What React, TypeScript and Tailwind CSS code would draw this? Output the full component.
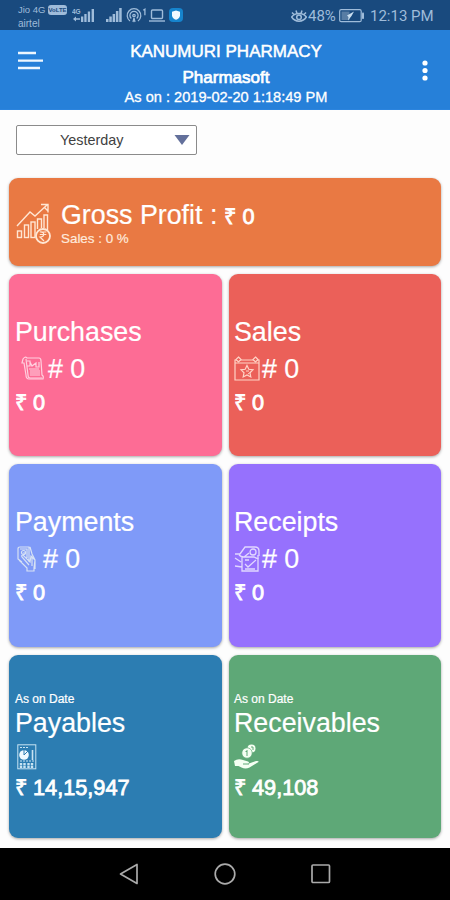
import React from "react";

const sans = "font-['Liberation_Sans',Arial,sans-serif]";

function Signal({ className = "" }: { className?: string }) {
  return (
    <svg className={className} width="16" height="14" viewBox="0 0 16 14" fill="#9fbcda">
      <rect x="0" y="11" width="2.5" height="3" />
      <rect x="3.3" y="8.5" width="2.5" height="5.5" />
      <rect x="6.6" y="6" width="2.5" height="8" />
      <rect x="9.9" y="3" width="2.5" height="11" />
      <rect x="13.2" y="0" width="2.5" height="14" />
    </svg>
  );
}

function StatusBar() {
  return (
    <div className="flex h-[30px] bg-[#194a7e] pl-[18px] text-[#9fbcda]">
      <div className="w-[50px] pt-[3px] text-[9.5px] leading-[13.5px]">
        <div className="flex items-center">
          <span className="w-[30px] whitespace-nowrap">Jio 4G</span>
          <span className="flex h-[10px] w-[19px] items-center justify-center rounded-[3px] bg-[#9fbcda] text-[6px] leading-none font-bold text-[#194a7e]">VoLTE</span>
        </div>
        <div className="text-[10px]">airtel</div>
      </div>
      <svg className="mt-[8px] ml-[4px]" width="23" height="15" viewBox="0 0 23 15" fill="#9fbcda">
        <text x="0" y="6" fontSize="6.5" fontWeight="bold" fontFamily="Liberation Sans">4G</text>
        <path d="M1 11l3-2.5v1.7h4v1.600H4v1.700zM9 8.500h2.300V14H9zM12.300 6h2.300v8h-2.300zM15.800 3.500h2.300V14h-2.300zM19.600 1h2.400v13h-2.400z" />
      </svg>
      <Signal className="mt-[8px] ml-[11px]" />
      <svg className="mt-[8px] ml-[4px]" width="21" height="15" viewBox="0 0 21 15" fill="none" stroke="#9fbcda" strokeWidth="1.300">
        <path d="M4 13A6.800 6.800 0 1 1 12 13M5.300 10.500a4.100 4.100 0 1 1 5.400 0" />
        <circle cx="8" cy="7.500" r="1.200" />
        <path d="M7 14l1-4 1 4M17.200 2.200l1.700-1v6" />
      </svg>
      <svg className="mt-[9px] ml-[2px]" width="16" height="13" viewBox="0 0 16 13" fill="none" stroke="#9fbcda" strokeWidth="1.400">
        <rect x="2.500" y="1" width="11" height="8.500" rx="1" />
        <path d="M0 12h16" />
      </svg>
      <svg className="mt-[8px] ml-[4px]" width="14" height="14" viewBox="0 0 14 14">
        <rect width="14" height="14" rx="4" fill="#1684cd" />
        <path d="M7 2.500l4 1.300v3.600C11 9.500 8.800 11 7 11.800 5.200 11 3 9.500 3 7.400V3.800z" fill="#f2faff" />
      </svg>
      <svg className="mt-[9px] ml-[108px]" width="16" height="14" viewBox="0 0 16 14" fill="none" stroke="#9fbcda" strokeWidth="1.500">
        <path d="M.7 8C4 3.200 12 3.200 15.300 8 12 13.500 4 13.500.7 8zM1 3.500l2.200 2.300M5 1.500l1 3M11 1.500l-1 3M15 3.500l-2.200 2.300" />
        <circle cx="8" cy="8.300" r="2.300" />
      </svg>
      <span className="mt-[6px] ml-[1px] w-[28px] font-[Roboto,sans-serif] text-[15px] leading-[20px]">48%</span>
      <svg className="mt-[9px] ml-[3px]" width="26" height="14" viewBox="0 0 26 14">
        <rect x=".7" y=".7" width="21.500" height="12" rx="1.500" fill="none" stroke="#9fbcda" strokeWidth="1.200" />
        <rect x="2.500" y="2.500" width="8" height="8.500" fill="#587da4" />
        <path d="M8 6.500l7-4-2.500 4.500L9 11.500l.5-3.500z" fill="#c9deef" />
        <rect x="23" y="3.500" width="2" height="6.500" rx=".8" fill="#9fbcda" />
      </svg>
      <span className="mt-[6px] ml-[5px] font-[Roboto,sans-serif] text-[15px] leading-[20px] whitespace-nowrap">12:13 PM</span>
    </div>
  );
}

function Header() {
  return (
    <header className="grid h-[80px] grid-cols-[50px_350px_50px] border-b border-[#2b84de] bg-[#2680d9] text-white">
      <svg className="mt-[20px] ml-[18px]" width="26" height="22" viewBox="0 0 26 22" stroke="#eef7ff" strokeWidth="2.300">
        <path d="M0 3h18M0 10.700h25M0 18h22" />
      </svg>
      <div className="flex flex-col items-center whitespace-nowrap">
        <div className="mt-[11px] h-[26px] pl-[2px] text-[17px] leading-[22px] [-webkit-text-stroke:0.5px_white]">KANUMURI PHARMACY</div>
        <div className="h-[20px] pl-[2px] text-[17px] leading-[22px] [-webkit-text-stroke:0.7px_white]">Pharmasoft</div>
        <div className="pl-[2px] text-[14.600px] leading-[20px] [-webkit-text-stroke:0.3px_white]">As on : 2019-02-20 1:18:49 PM</div>
      </div>
      <svg className="mt-[29px] ml-[21px]" width="8" height="22" viewBox="0 0 8 22" fill="white">
        <circle cx="4" cy="4" r="2.600" />
        <circle cx="4" cy="11.500" r="2.600" />
        <circle cx="4" cy="19" r="2.600" />
      </svg>
    </header>
  );
}

function ProfitIcon() {
  return (
    <svg width="36" height="42" viewBox="0 0 36 42" fill="none" stroke="#ffe6d3" strokeWidth="1.400">
      <path d="M1 23L14 9l5 4L31 2M25 1.500h7v8M28 4l4 4" />
      <rect x="1.500" y="28" width="4" height="6.500" />
      <rect x="8.500" y="22" width="4" height="12.500" />
      <rect x="15" y="19" width="4" height="15.500" />
      <path d="M21.500 26V16h4v9M28 25V12h3.500v15" />
      <circle cx="27" cy="33" r="7" fill="#e97943" strokeWidth="1.800" />
      <path d="M23.800 29h6.500M23.800 31.500h6.500M24 29c5-.5 5 5 0 5l4 4" strokeWidth="1.200" />
    </svg>
  );
}

function PurchaseIcon() {
  return (
    <svg width="24" height="26" viewBox="0 0 24 26" fill="none" stroke="#ffd0df" strokeWidth="1.200">
      <path d="M2 3q2-3 4-1h12q2 0 2 3l1 14q2 1 1 4H8q-3 0-3-4L3 7H1z" />
      <path d="M5 3l2 16q0 3 2 3h12M9 6l2 4 4-3v4h3V6M8 13h10M9 15h10M9 17h10M9 19h10M6 5h3v5H6" />
    </svg>
  );
}

function SalesIcon() {
  return (
    <svg width="26" height="26" viewBox="0 0 26 26" fill="none" stroke="#ffd3c6" strokeWidth="1.200">
      <path d="M3 4H1v20h24V4h-2M6 4h14M1 7h24" />
      <path d="M4.500 1L7 3.500 4.500 6 2 3.500zM21.500 1L24 3.500 21.500 6 19 3.500z" />
      <path d="M13 9.500l1.800 3.800 4.200.5-3 3 .8 4.200-3.800-2-3.800 2 .8-4.200-3-3 4.200-.5z" />
      <path d="M12 15h3M14 18l3-2" strokeWidth="1" />
    </svg>
  );
}

function PaymentIcon() {
  return (
    <svg width="20" height="28" viewBox="0 0 20 28" fill="none" stroke="#d7e2f4" strokeWidth="1.200">
      <path d="M5 17L1 14V4q0-2 2-2h9v15M3 4h7v9M13 2l2 7 3 6v9M2 15l8 8v3h7v-3l1-8-4-4-1 6-7-7q-2 0-1 2l7 8M6 8h3M15 12v9" />
      <circle cx="6.500" cy="7.500" r="2" />
    </svg>
  );
}

function ReceiptIcon() {
  return (
    <svg width="26" height="28" viewBox="0 0 26 28" fill="none" stroke="#e1d7ff" strokeWidth="1.300">
      <path d="M1 9h5l5-7h10q4 0 4 4v5M1 13l6 4M1 21l7 1M8 12h12l4 2v12H8zM5 10q2 2 5 2l5-4" />
      <circle cx="19" cy="7" r="3" />
      <path d="M11 19l3 3 8-7M11 15h4M11 24h10M24 10v4" />
    </svg>
  );
}

function PayableIcon() {
  return (
    <svg width="20" height="26" viewBox="0 0 20 26" fill="none" stroke="#c7e3f2" strokeWidth="1">
      <rect x=".8" y=".8" width="18" height="24" />
      <path d="M3 3.500h8M3 17h14" strokeDasharray="2 1" />
      <circle cx="7" cy="11" r="4.800" fill="#eefaff" stroke="none" />
      <path d="M7 5v6l4-4" stroke="#2c7db2" />
      <path d="M15.500 6v10" strokeWidth="1.600" />
      <path d="M4 19v5M7.500 19v5M11.500 19v5M15 19v5" strokeWidth="2.400" strokeDasharray="2.200 .6" />
    </svg>
  );
}

function ReceivableIcon() {
  return (
    <svg width="26" height="26" viewBox="0 0 26 26" fill="#f5fff3">
      <circle cx="17.500" cy="4.500" r="4" />
      <circle cx="13" cy="9" r="5.200" stroke="#5ea877" strokeWidth=".7" />
      <path d="M0 17q4-3 9-1l5 1.500q2 1 0 2h-4 5l7-2.500q3-.5 2.500 1l-9 5.500q-4 2-8 0l-3-1.500H1z" />
      <path d="M13 6v6M11.500 7.500H13M17 3h2v3M9 20h6" stroke="#5ea877" fill="none" />
    </svg>
  );
}

const light = "text-[26.8px] leading-[32px] whitespace-nowrap [-webkit-text-stroke:0.2px_white]";
const amount = "text-[21.7px] leading-[26px] whitespace-nowrap [-webkit-text-stroke:0.8px_white]";
const cardBase = "rounded-[9px] shadow-[0_1px_3px_rgba(0,0,0,0.35)]";

function CountCard({ title, color, icon, iconBox }: { title: string; color: string; icon: React.ReactNode; iconBox: string }) {
  return (
    <section className={`${cardBase} ${color} h-full pt-[42px]`}>
      <h2 className={light}>{title}</h2>
      <div className="mt-[5px] flex h-[32px] items-center">
        <span className={iconBox}>{icon}</span>
        <span className={light}># 0</span>
      </div>
      <div className={`${amount} mt-[5px]`}>₹ 0</div>
    </section>
  );
}

function BalanceCard({ title, color, icon, value }: { title: string; color: string; icon: React.ReactNode; value: string }) {
  return (
    <section className={`${cardBase} ${color} h-full pt-[36px]`}>
      <div className="text-[12px] leading-[16px] [-webkit-text-stroke:0.2px_white]">As on Date</div>
      <h2 className={light}>{title}</h2>
      <div className="mt-[4px] flex h-[28px] items-center">{icon}</div>
      <div className={`${amount} mt-[4px]`}>{value}</div>
    </section>
  );
}

function NavBar() {
  return (
    <nav className="flex h-[52px] items-center justify-center gap-[73px] bg-black">
      <svg width="22" height="24" viewBox="0 0 22 24" fill="none" stroke="#aaa" strokeWidth="1.700" strokeLinejoin="round">
        <path d="M2.500 12L19 2.500v19z" />
      </svg>
      <svg width="24" height="24" viewBox="0 0 24 24" fill="none" stroke="#aaa" strokeWidth="1.700">
        <circle cx="12" cy="12" r="9.800" />
      </svg>
      <svg width="22" height="24" viewBox="0 0 22 24" fill="none" stroke="#aaa" strokeWidth="1.700">
        <rect x="2" y="3" width="17.500" height="17.500" rx="1" />
      </svg>
    </nav>
  );
}

export default function App() {
  return (
    <div className={`${sans} flex h-[900px] w-[450px] flex-col overflow-hidden bg-[#fdfdfd] text-white`}>
      <StatusBar />
      <Header />
      <main className="flex flex-1 flex-col pr-[9px] pl-[9px]">
        <div className="h-[68px] pt-[15px] pl-[7px]">
          <button className="flex h-[30px] w-[181px] items-center justify-between rounded-[2px] border border-[#8b8b8b] bg-white pr-[6px] pl-[43px] text-[14.400px] text-[#414141]">
            <span className="pt-px">Yesterday</span>
            <svg width="16" height="10" viewBox="0 0 16 10" fill="#63709b"><path d="M.5 0h15L8 10z" /></svg>
          </button>
        </div>
        <section className={`${cardBase} flex h-[88px] bg-[#e97943] pl-[7px]`}>
          <div className="mt-[25px] w-[45px]"><ProfitIcon /></div>
          <div className="pt-[21px]">
            <div className="flex items-baseline gap-[7px]">
              <h2 className={light}>Gross Profit :</h2>
              <span className={amount}>₹ 0</span>
            </div>
            <div className="text-[13.400px] leading-[16px] text-[#ffe9dc] [-webkit-text-stroke:0.2px_#ffe9dc]">Sales : 0 %</div>
          </div>
        </section>
        <div className="mt-[8px] grid grid-cols-[213px_212px] grid-rows-[182px_183px_183px] gap-x-[7px] gap-y-[8px]">
          <CountCard title="Purchases" color="bg-[#fd6c95] pl-[6px]" icon={<PurchaseIcon />} iconBox="ml-[6px] w-[27px]" />
          <CountCard title="Sales" color="bg-[#eb6059] pl-[5px]" icon={<SalesIcon />} iconBox="w-[28px]" />
          <CountCard title="Payments" color="bg-[#7f9af8] pl-[6px]" icon={<PaymentIcon />} iconBox="ml-[2px] w-[26px]" />
          <CountCard title="Receipts" color="bg-[#9671fd] pl-[5px]" icon={<ReceiptIcon />} iconBox="w-[28px]" />
          <BalanceCard title="Payables" color="bg-[#2c7db2] pl-[6px]" icon={<span className="ml-[2px]"><PayableIcon /></span>} value="₹ 14,15,947" />
          <BalanceCard title="Receivables" color="bg-[#5ea877] pl-[5px]" icon={<ReceivableIcon />} value="₹ 49,108" />
        </div>
      </main>
      <NavBar />
    </div>
  );
}
